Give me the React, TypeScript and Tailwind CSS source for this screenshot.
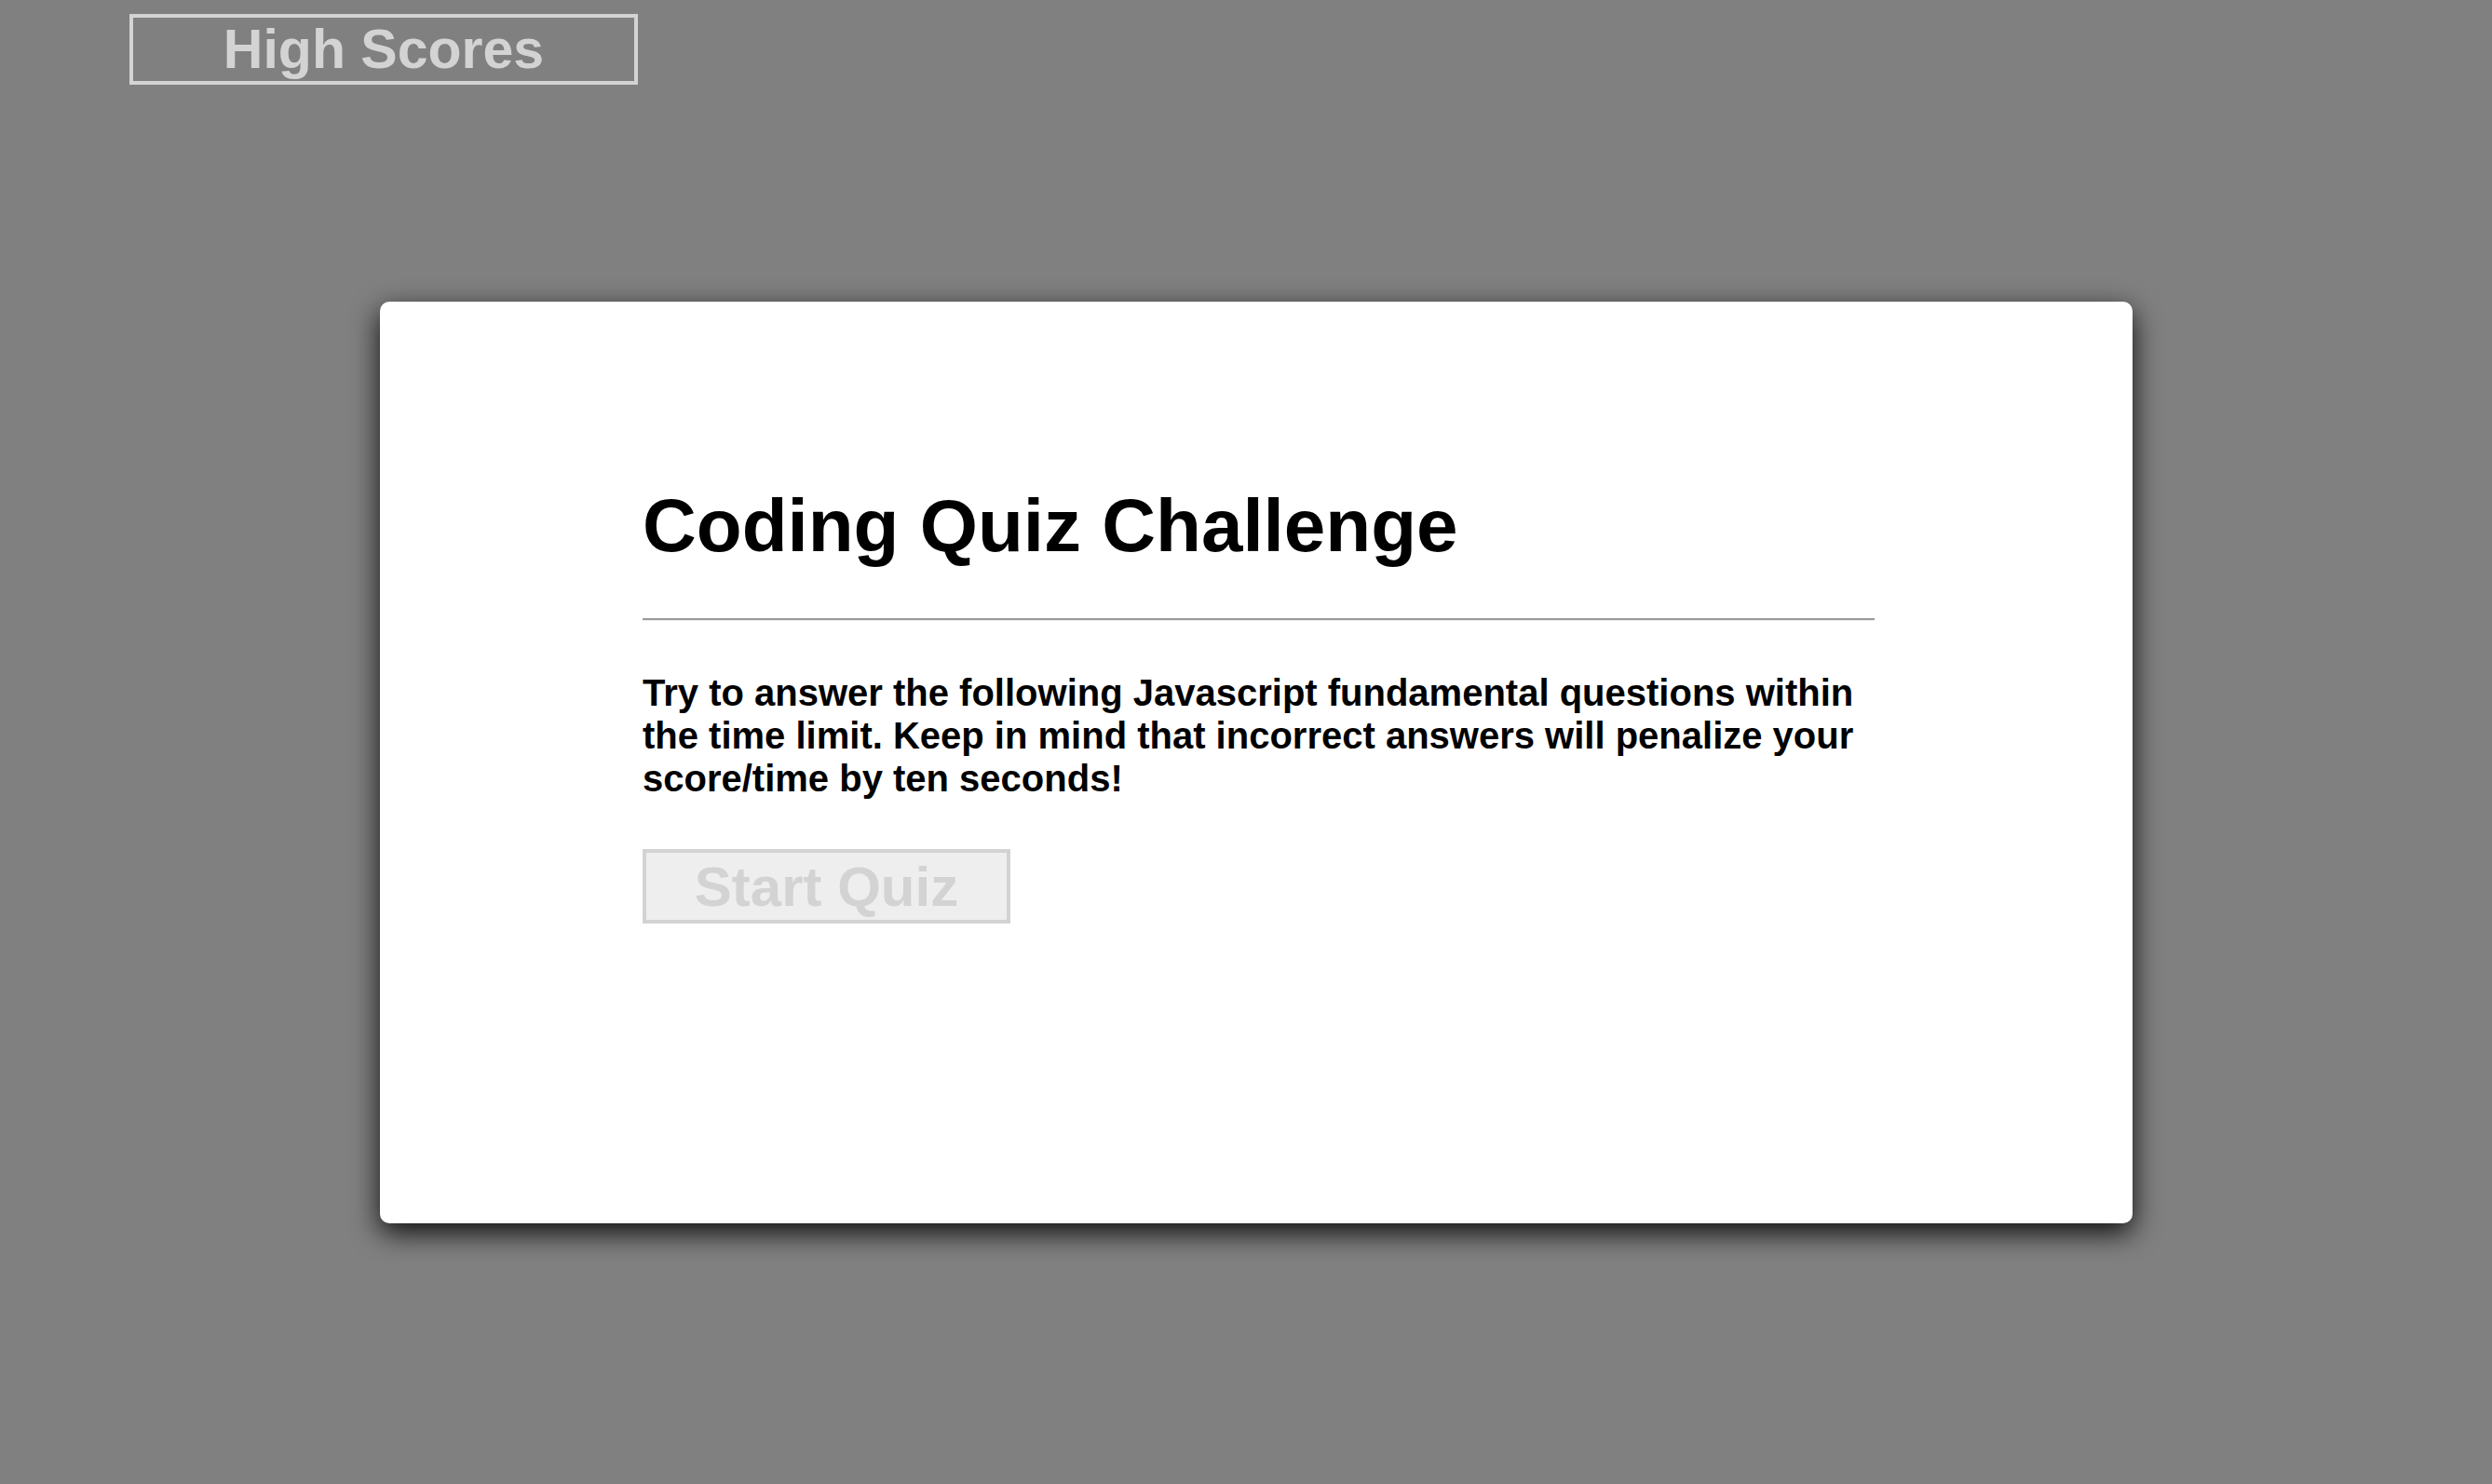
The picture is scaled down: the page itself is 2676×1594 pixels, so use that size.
import React from "react";

export default function App() {
  return (
    <div
      className="min-h-screen w-full bg-[#808080] flex flex-col"
      style={{ fontFamily: '"Liberation Sans", Arial, Helvetica, sans-serif' }}
    >
      <div className="ml-[139px] mt-[15px]">
        <button className="w-[546px] h-[76px] border-4 border-[#d3d3d3] bg-transparent text-[#d3d3d3] font-bold text-[59px] leading-[68px] flex items-center justify-center">
          High Scores
        </button>
      </div>

      <div className="ml-[408px] mt-[233px] w-[1882px] h-[990px] bg-white rounded-[10px] shadow-[0_10px_30px_rgba(0,0,0,0.9)] flex flex-col">
        <div className="ml-[282px] mt-[195px] w-[1323px] flex flex-col">
          <h1 className="text-[80px] leading-[92px] font-bold text-black">
            Coding Quiz Challenge
          </h1>
          <div className="mt-[53px] h-[2px] bg-[#9a9a9a]" />
          <div className="h-[1px] bg-[#eeeeee]" />
          <p className="mt-[54px] text-[40px] leading-[46px] font-bold text-black">
            Try to answer the following Javascript fundamental questions within the time limit. Keep in mind that incorrect answers will penalize your score/time by ten seconds!
          </p>
          <div className="mt-[53px]">
            <button className="w-[395px] h-[80px] border-4 border-[#d3d3d3] bg-[#eeeeee] text-[#d3d3d3] font-bold text-[60px] leading-[69px] flex items-center justify-center">
              Start Quiz
            </button>
          </div>
        </div>
      </div>
    </div>
  );
}
